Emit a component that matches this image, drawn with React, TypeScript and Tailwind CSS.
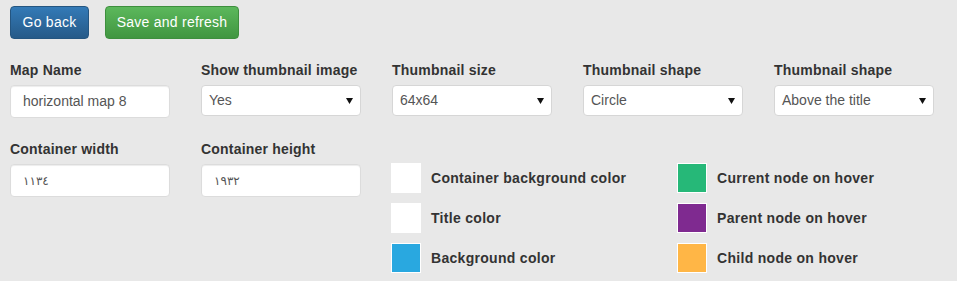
import React from "react";

const font = { fontFamily: '"Liberation Sans", Arial, sans-serif' };

function Label({ children }: { children: React.ReactNode }) {
  return (
    <div className="mb-[5px] text-[14px] leading-[20px] font-bold tracking-[0.2px] text-[#333]">{children}</div>
  );
}

function TextInput({ value, arabic }: { value: string; arabic?: boolean }) {
  return (
    <div className="flex h-[33px] w-[160px] items-center rounded-[4px] border border-[#dcdcdc] bg-white px-[12px] shadow-[inset_0_1px_1px_rgba(0,0,0,0.075)]">
      <span
        className={arabic ? "text-[12px] text-[#555]" : "text-[14px] text-[#555]"}
        style={arabic ? { fontFamily: '"DejaVu Sans", "Noto Sans", sans-serif' } : undefined}
      >
        {value}
      </span>
    </div>
  );
}

function Select({ value }: { value: string }) {
  return (
    <div className="relative mt-[1px] flex h-[31px] w-[160px] items-center rounded-[4px] border border-[#d6d6d6] bg-white pl-[7px] text-[14px] text-[#555]">
      <span>{value}</span>
      <svg className="absolute right-[7px] top-[12px]" width="7" height="6" viewBox="0 0 7 6">
        <path d="M0 0H7L3.5 6Z" fill="#111" />
      </svg>
    </div>
  );
}

function Swatch({ color, label }: { color: string; label: string }) {
  return (
    <div className="flex h-[30px] items-center gap-[10px]">
      <div className="h-[30px] w-[30px] border border-white" style={{ backgroundColor: color }} />
      <span className="text-[14px] font-bold tracking-[0.3px] text-[#333]">{label}</span>
    </div>
  );
}

export default function App() {
  return (
    <div className="h-[281px] w-[957px] overflow-hidden bg-[#e8e8e8] pl-[10px] pt-[6px]" style={font}>
      <div className="flex gap-[16px]">
        <button className="h-[33px] w-[79px] rounded-[4px] border border-[#245580] bg-gradient-to-b from-[#337ab7] to-[#265a88] text-[14px] tracking-[0.25px] text-white">
          Go back
        </button>
        <button className="h-[33px] w-[134px] rounded-[4px] border border-[#3e8f3e] bg-gradient-to-b from-[#5cb85c] to-[#419641] text-[14px] tracking-[0.25px] text-white">
          Save and refresh
        </button>
      </div>

      <div className="mt-[21px] flex gap-[31px]">
        <div className="w-[160px]">
          <Label>Map Name</Label>
          <TextInput value="horizontal map 8" />
        </div>
        <div className="w-[160px]">
          <Label>Show thumbnail image</Label>
          <Select value="Yes" />
        </div>
        <div className="w-[160px]">
          <Label>Thumbnail size</Label>
          <Select value="64x64" />
        </div>
        <div className="w-[160px]">
          <Label>Thumbnail shape</Label>
          <Select value="Circle" />
        </div>
        <div className="w-[160px]">
          <Label>Thumbnail shape</Label>
          <Select value="Above the title" />
        </div>
      </div>

      <div className="mt-[21px] flex">
        <div className="w-[160px]">
          <Label>Container width</Label>
          <TextInput value="١١٣٤" arabic />
        </div>
        <div className="ml-[31px] w-[160px]">
          <Label>Container height</Label>
          <TextInput value="١٩٣٢" arabic />
        </div>
        <div className="ml-[30px] mt-[24px] flex">
          <div className="flex w-[286px] flex-col gap-[10px]">
            <Swatch color="#ffffff" label="Container background color" />
            <Swatch color="#ffffff" label="Title color" />
            <Swatch color="#29a8e0" label="Background color" />
          </div>
          <div className="flex flex-col gap-[10px]">
            <Swatch color="#26b878" label="Current node on hover" />
            <Swatch color="#7f2a90" label="Parent node on hover" />
            <Swatch color="#ffb646" label="Child node on hover" />
          </div>
        </div>
      </div>
    </div>
  );
}
